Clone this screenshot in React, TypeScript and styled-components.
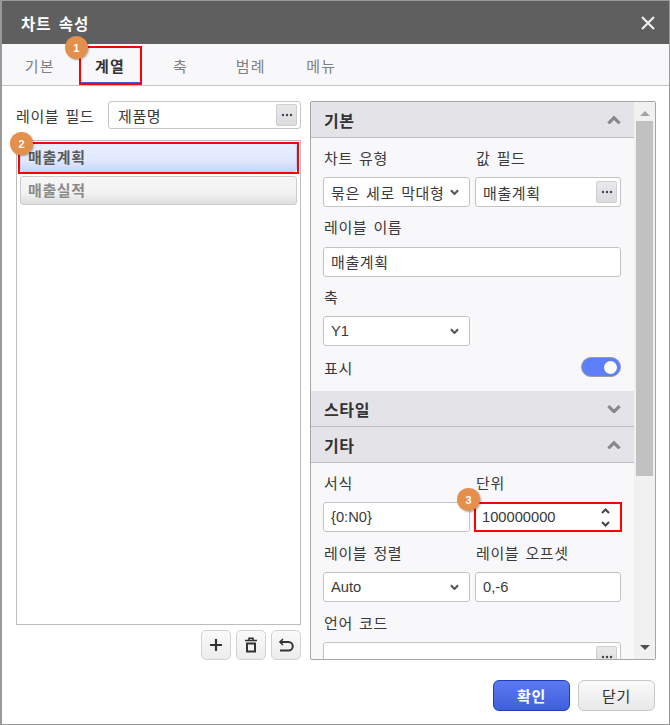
import styled, { createGlobalStyle } from 'styled-components';

const GlobalStyle = createGlobalStyle`
  html, body {
    margin: 0;
    padding: 0;
    background: #fff;
  }
  * {
    box-sizing: border-box;
  }
`;

const FONT = `'Liberation Sans', 'Noto Sans CJK KR', sans-serif`;

const Dialog = styled.div`
  width: 670px;
  height: 725px;
  display: flex;
  flex-direction: column;
  background: #fff;
  border: 1px solid #999;
  border-left-width: 2px;
  font-family: ${FONT};
  font-size: 15px;
  letter-spacing: 0.6px;
  word-spacing: 1.5px;
  color: #3a3a3a;
`;

const TitleBar = styled.div`
  height: 43px;
  flex: none;
  display: flex;
  align-items: center;
  justify-content: space-between;
  padding: 0 13px 0 19px;
  background: #5f5f60;
  color: #fff;
  font-size: 15.5px;
  font-weight: 700;
  letter-spacing: 1px;
  word-spacing: 2px;
`;

const CloseButton = styled.svg`
  width: 16px;
  height: 16px;
  display: block;
`;

const TabBar = styled.div`
  height: 42px;
  flex: none;
  display: flex;
  padding-left: 2.5px;
  background: #f8f8fb;
  border-bottom: 1px solid #c4c4c4;
`;

const Tab = styled.div<{ $active?: boolean }>`
  position: relative;
  width: 70.4px;
  display: flex;
  align-items: center;
  justify-content: center;
  padding-top: 1px;
  color: ${(p) => (p.$active ? '#333' : '#808080')};
  font-weight: ${(p) => (p.$active ? 700 : 400)};
  letter-spacing: 1.2px;
`;

const RedBox = styled.div`
  position: absolute;
  left: 4px;
  right: 3px;
  top: 2px;
  bottom: 0;
  border: 2px solid #f00;
  box-shadow: inset 0 -1px 0 #3b5be0;
  pointer-events: none;
`;

const Badge = styled.div`
  position: absolute;
  width: 23px;
  height: 23px;
  border-radius: 50%;
  display: flex;
  align-items: center;
  justify-content: center;
  background: #e58f4c;
  color: #fff;
  font-size: 11px;
  font-weight: 700;
  letter-spacing: 0;
  box-shadow: 1px 1px 2px rgba(0, 0, 0, 0.3);
  z-index: 3;
`;

const TabBadge = styled(Badge)`
  left: -10px;
  top: -8px;
`;

const ListBadge = styled(Badge)`
  left: -11px;
  top: -12px;
`;

const UnitBadge = styled(Badge)`
  left: -19px;
  top: -16px;
`;

const Body = styled.div`
  flex: 1;
  display: flex;
  padding: 15px 13px 0 14px;
  min-height: 0;
`;

const BodyColumn = styled.div`
  flex: 1;
  display: flex;
  flex-direction: column;
  min-height: 0;
`;

const Row = styled.div`
  display: flex;
  min-height: 0;
  gap: 9px;
`;

const LeftColumn = styled.div`
  width: 285px;
  flex: none;
  height: 559px;
  display: flex;
  flex-direction: column;
`;

const LabelRow = styled.div`
  height: 28px;
  flex: none;
  display: flex;
  align-items: center;
  justify-content: space-between;
`;

const SeriesList = styled.div`
  height: 485px;
  flex: none;
  margin-top: 11px;
  padding: 2px 3px 0 3px;
  border: 1px solid #bdbdbd;
  background: #fff;
`;

const SeriesItem = styled.div<{ $selected?: boolean }>`
  position: relative;
  height: 29px;
  margin-bottom: 4px;
  padding: 0 0 2px 7px;
  display: flex;
  align-items: center;
  border: 1px solid ${(p) => (p.$selected ? '#c3cff2' : '#ccc')};
  border-radius: 3px;
  background: ${(p) =>
    p.$selected
      ? 'linear-gradient(#e8eefe, #e2e9fd 60%, #c9d6f8)'
      : 'linear-gradient(#f6f6f6, #f2f2f2 60%, #dedede)'};
  color: ${(p) => (p.$selected ? '#5a5a5a' : '#8a8a8a')};
  font-weight: 700;
`;

const ItemHighlight = styled.div`
  position: absolute;
  left: -3px;
  right: -3px;
  top: -2px;
  bottom: -3px;
  border: 2px solid #f00;
`;

const ListActions = styled.div`
  display: flex;
  justify-content: flex-end;
  gap: 5px;
  margin-top: 5px;
`;

const IconButton = styled.button`
  width: 30px;
  height: 30px;
  padding: 0;
  display: flex;
  align-items: center;
  justify-content: center;
  border: 1px solid #d2d2d2;
  border-radius: 5px;
  background: linear-gradient(#fafafa, #ececec);
`;

const Panel = styled.div`
  flex: 1;
  height: 559px;
  display: flex;
  border: 1px solid #a6a6a6;
  border-radius: 2px;
  overflow: hidden;
  background: #f8f8fb;
`;

const PanelContent = styled.div`
  flex: 1;
  min-width: 0;
  overflow: hidden;
`;

const ScrollBar = styled.div`
  width: 21px;
  flex: none;
  display: flex;
  flex-direction: column;
  align-items: center;
  background: #f1f1f1;
`;

const ScrollArrow = styled.div<{ $down?: boolean }>`
  width: 0;
  height: 0;
  flex: none;
  margin: ${(p) => (p.$down ? 'auto 0 9px' : '9px 0 5px')};
  border-left: 5px solid transparent;
  border-right: 5px solid transparent;
  ${(p) => (p.$down ? 'border-top: 5px solid #505050;' : 'border-bottom: 5px solid #a3a3a3;')}
`;

const ScrollThumb = styled.div`
  width: 17px;
  height: 355px;
  flex: none;
  background: #c1c1c1;
`;

const SectionHeader = styled.div`
  height: 36px;
  display: flex;
  align-items: center;
  justify-content: space-between;
  padding: 0 13px;
  background: #e4e4e8;
  border-bottom: 1px solid #bdbdc0;
  font-size: 16px;
  font-weight: 700;
  color: #333;
`;

const SectionBody = styled.div<{ $gap: number }>`
  padding: 10.5px 13px 14px 12px;
  display: flex;
  flex-direction: column;
  gap: ${(p) => p.$gap}px;
`;

const Columns = styled.div`
  display: grid;
  grid-template-columns: 147px 146px;
  gap: 5px;
`;

const Field = styled.div`
  position: relative;
  min-width: 0;
`;

const FieldLabel = styled.div`
  height: 20px;
  margin-bottom: 8.5px;
  padding-left: 1px;
  line-height: 20px;
  white-space: nowrap;
`;

const Box = styled.div<{ $half?: boolean; $select?: boolean }>`
  position: relative;
  height: 30px;
  width: ${(p) => (p.$half ? '147px' : '100%')};
  display: flex;
  align-items: center;
  justify-content: space-between;
  padding: 0 ${(p) => (p.$select ? '10px' : '3px')} 0 7px;
  background: #fff;
  border: 1px solid #c4c4c4;
  border-radius: 3px;
  white-space: nowrap;
`;

const MarkedBox = styled(Box)`
  width: calc(100% + 2px);
  margin: 0 -1px;
  padding: 0 10px 0 6px;
  border: 2px solid #f00;
  border-radius: 0;
`;

const LabelFieldBox = styled(Box)`
  width: 193px;
  flex: none;
  height: 28px;
  padding-left: 9px;
`;

const LatinText = styled.span`
  font-size: 14.7px;
  letter-spacing: 0;
`;

const DotsButton = styled.div`
  width: 21px;
  height: 22px;
  flex: none;
  display: flex;
  align-items: center;
  justify-content: center;
  border: 1px solid #cfcfcf;
  border-radius: 2px;
  background: linear-gradient(#e9e9ec, #dcdce0);
`;

const Dots = () => (
  <svg width="12" height="4" viewBox="0 0 12 4">
    <circle cx="2" cy="2" r="1.2" fill="#444" />
    <circle cx="6" cy="2" r="1.2" fill="#444" />
    <circle cx="10" cy="2" r="1.2" fill="#444" />
  </svg>
);

const Chevron = ({ up, size = 9, color = '#555', weight = 2.4 }: { up?: boolean; size?: number; color?: string; weight?: number }) => (
  <svg width={size} height={size * 0.7} viewBox="0 0 10 7" style={{ flex: 'none' }}>
    <path
      d={up ? 'M1 6 L5 2 L9 6' : 'M1 1.5 L5 5.5 L9 1.5'}
      fill="none"
      stroke={color}
      strokeWidth={weight}
    />
  </svg>
);

const ToggleRow = styled.div`
  height: 20px;
  display: flex;
  align-items: center;
  justify-content: space-between;
  padding-left: 1px;
`;

const Toggle = styled.div`
  width: 40px;
  height: 20px;
  display: flex;
  align-items: center;
  justify-content: flex-end;
  padding-right: 3px;
  border-radius: 10px;
  border: 1px solid #9a9aa8;
  background: #5d7ffb;
`;

const ToggleKnob = styled.div`
  width: 13px;
  height: 13px;
  border-radius: 50%;
  background: #fff;
`;

const Footer = styled.div`
  flex: 1;
  display: flex;
  justify-content: flex-end;
  align-items: flex-start;
  gap: 8px;
  padding: 20px 1px 0 0;
`;

const FooterButton = styled.button<{ $primary?: boolean }>`
  width: 77px;
  height: 31px;
  padding: 0;
  font-family: ${FONT};
  font-size: 15px;
  font-weight: ${(p) => (p.$primary ? 700 : 400)};
  letter-spacing: 0.6px;
  border-radius: 6px;
  color: ${(p) => (p.$primary ? '#fff' : '#333')};
  border: 1px solid ${(p) => (p.$primary ? '#1f3fb8' : '#c8c8c8')};
  background: ${(p) =>
    p.$primary ? 'linear-gradient(#5a7bf0, #3f5fdc)' : 'linear-gradient(#fafafa, #e8e8e8)'};
`;

const App = () => {
  return (
    <>
      <GlobalStyle />
      <Dialog>
        <TitleBar>
          <span>차트 속성</span>
          <CloseButton viewBox="0 0 16 16">
            <path d="M2 2 L14 14 M14 2 L2 14" stroke="#eee" strokeWidth="2.2" />
          </CloseButton>
        </TitleBar>
        <TabBar>
          <Tab>기본</Tab>
          <Tab $active>
            계열
            <RedBox />
            <TabBadge>1</TabBadge>
          </Tab>
          <Tab>축</Tab>
          <Tab>범례</Tab>
          <Tab>메뉴</Tab>
        </TabBar>
        <Body>
          <BodyColumn>
            <Row>
              <LeftColumn>
                <LabelRow>
                  <span>레이블 필드</span>
                  <LabelFieldBox>
                    <span>제품명</span>
                    <DotsButton>
                      <Dots />
                    </DotsButton>
                  </LabelFieldBox>
                </LabelRow>
                <SeriesList>
                  <SeriesItem $selected>
                    매출계획
                    <ItemHighlight />
                    <ListBadge>2</ListBadge>
                  </SeriesItem>
                  <SeriesItem>매출실적</SeriesItem>
                </SeriesList>
                <ListActions>
                  <IconButton>
                    <svg width="14" height="14" viewBox="0 0 14 14">
                      <path d="M7 1 V13 M1 7 H13" stroke="#333" strokeWidth="2.2" fill="none" />
                    </svg>
                  </IconButton>
                  <IconButton>
                    <svg width="14" height="16" viewBox="0 0 14 16">
                      <path d="M1 3.5 H13 M5 3 V1.2 H9 V3" stroke="#333" strokeWidth="1.6" fill="none" />
                      <path d="M3 6.5 H11 V14.5 H3 Z" stroke="#333" strokeWidth="2" fill="none" />
                    </svg>
                  </IconButton>
                  <IconButton>
                    <svg width="16" height="14" viewBox="0 0 16 14">
                      <path d="M5 1 L2 4 L5 7" stroke="#333" strokeWidth="1.6" fill="none" />
                      <path d="M2.5 4 H10.5 A4 4 0 0 1 10.5 12.5 H2" stroke="#333" strokeWidth="2" fill="none" />
                    </svg>
                  </IconButton>
                </ListActions>
              </LeftColumn>
              <Panel>
                <PanelContent>
                  <SectionHeader>
                    기본
                    <Chevron up size={14} color="#888" weight={2.2} />
                  </SectionHeader>
                  <SectionBody $gap={11}>
                    <Columns>
                      <Field>
                        <FieldLabel>차트 유형</FieldLabel>
                        <Box $select>
                          <span>묶은 세로 막대형</span>
                          <Chevron />
                        </Box>
                      </Field>
                      <Field>
                        <FieldLabel>값 필드</FieldLabel>
                        <Box>
                          <span>매출계획</span>
                          <DotsButton>
                            <Dots />
                          </DotsButton>
                        </Box>
                      </Field>
                    </Columns>
                    <Field>
                      <FieldLabel>레이블 이름</FieldLabel>
                      <Box>매출계획</Box>
                    </Field>
                    <Field>
                      <FieldLabel>축</FieldLabel>
                      <Box $half $select>
                        <LatinText>Y1</LatinText>
                        <Chevron />
                      </Box>
                    </Field>
                    <ToggleRow>
                      표시
                      <Toggle>
                        <ToggleKnob />
                      </Toggle>
                    </ToggleRow>
                  </SectionBody>
                  <SectionHeader>
                    스타일
                    <Chevron size={14} color="#888" weight={2.2} />
                  </SectionHeader>
                  <SectionHeader>
                    기타
                    <Chevron up size={14} color="#888" weight={2.2} />
                  </SectionHeader>
                  <SectionBody $gap={11.5}>
                    <Columns>
                      <Field>
                        <FieldLabel>서식</FieldLabel>
                        <Box>
                          <LatinText>{'{0:N0}'}</LatinText>
                        </Box>
                      </Field>
                      <Field>
                        <FieldLabel>단위</FieldLabel>
                        <MarkedBox>
                          <UnitBadge>3</UnitBadge>
                          <LatinText>100000000</LatinText>
                          <svg width="9" height="21" viewBox="0 0 9 21">
                            <path d="M1 6 L4.5 2.5 L8 6 M1 15 L4.5 18.5 L8 15" stroke="#444" strokeWidth="2" fill="none" />
                          </svg>
                        </MarkedBox>
                      </Field>
                    </Columns>
                    <Columns>
                      <Field>
                        <FieldLabel>레이블 정렬</FieldLabel>
                        <Box $select>
                          <LatinText>Auto</LatinText>
                          <Chevron />
                        </Box>
                      </Field>
                      <Field>
                        <FieldLabel>레이블 오프셋</FieldLabel>
                        <Box>
                          <LatinText>0,-6</LatinText>
                        </Box>
                      </Field>
                    </Columns>
                    <Field>
                      <FieldLabel>언어 코드</FieldLabel>
                      <Box>
                        <span />
                        <DotsButton>
                          <Dots />
                        </DotsButton>
                      </Box>
                    </Field>
                  </SectionBody>
                </PanelContent>
                <ScrollBar>
                  <ScrollArrow />
                  <ScrollThumb />
                  <ScrollArrow $down />
                </ScrollBar>
              </Panel>
            </Row>
            <Footer>
              <FooterButton $primary>확인</FooterButton>
              <FooterButton>닫기</FooterButton>
            </Footer>
          </BodyColumn>
        </Body>
      </Dialog>
    </>
  );
};

export default App;
